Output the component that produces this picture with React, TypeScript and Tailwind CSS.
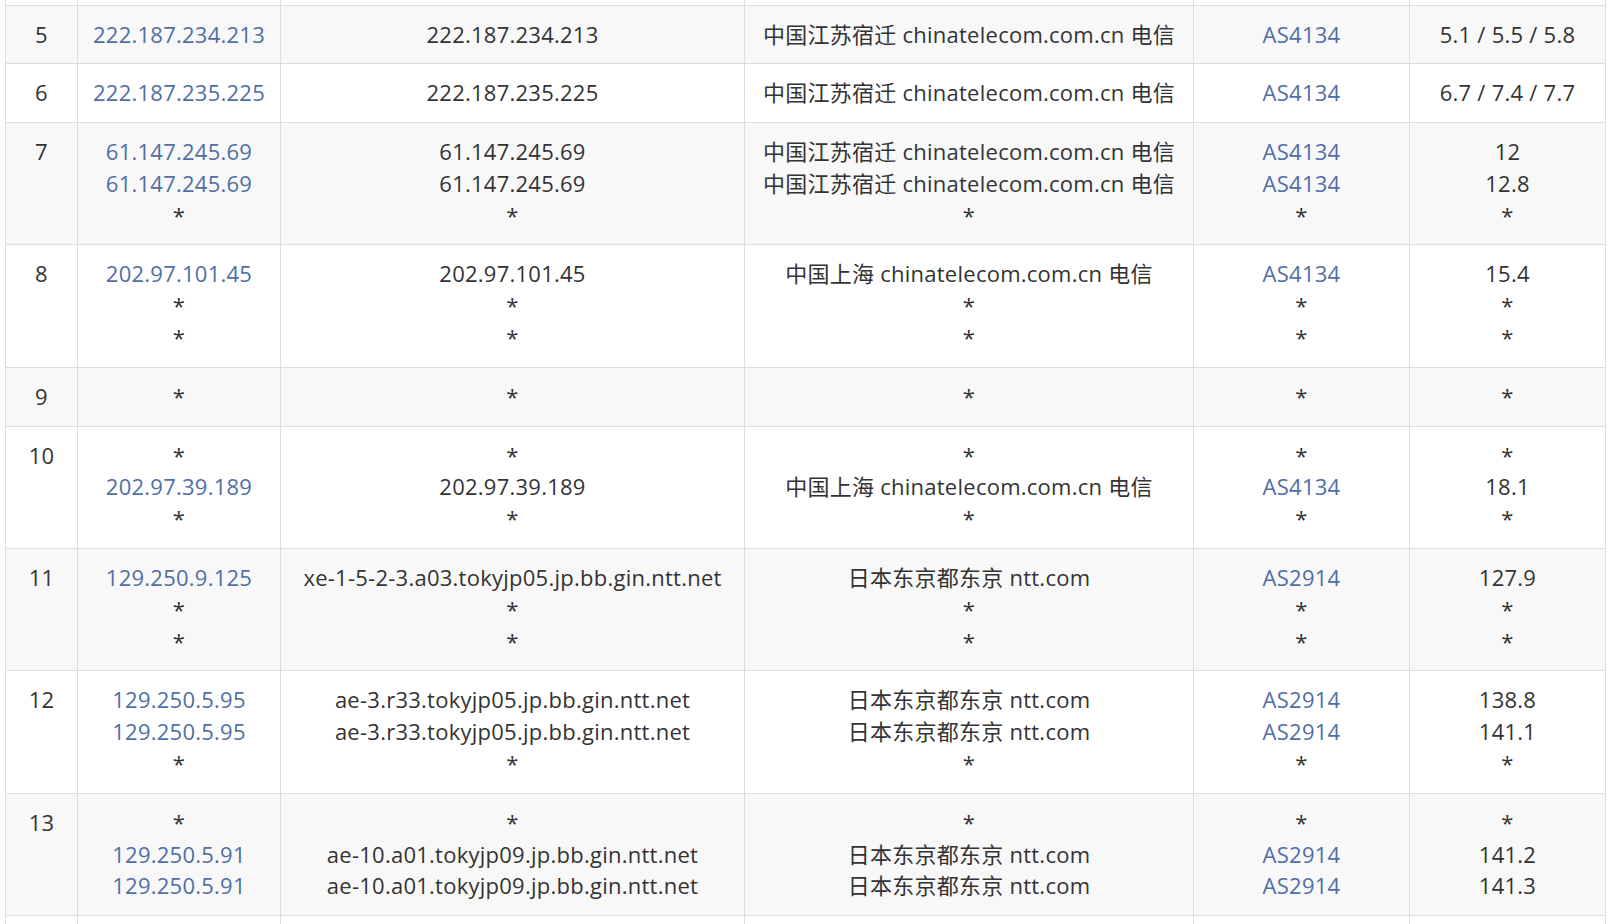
import React from "react";

type Row = {
  hop: number;
  ip: string[];
  host: string[];
  loc: string[];
  as: string[];
  rtt: string[];
};

const JS = "中国江苏宿迁 chinatelecom.com.cn 电信";
const SH = "中国上海 chinatelecom.com.cn 电信";
const TK = "日本东京都东京 ntt.com";

const rows: Row[] = [
  { hop: 5, ip: ["222.187.234.213"], host: ["222.187.234.213"], loc: [JS], as: ["AS4134"], rtt: ["5.1 / 5.5 / 5.8"] },
  { hop: 6, ip: ["222.187.235.225"], host: ["222.187.235.225"], loc: [JS], as: ["AS4134"], rtt: ["6.7 / 7.4 / 7.7"] },
  {
    hop: 7,
    ip: ["61.147.245.69", "61.147.245.69", "*"],
    host: ["61.147.245.69", "61.147.245.69", "*"],
    loc: [JS, JS, "*"],
    as: ["AS4134", "AS4134", "*"],
    rtt: ["12", "12.8", "*"],
  },
  {
    hop: 8,
    ip: ["202.97.101.45", "*", "*"],
    host: ["202.97.101.45", "*", "*"],
    loc: [SH, "*", "*"],
    as: ["AS4134", "*", "*"],
    rtt: ["15.4", "*", "*"],
  },
  { hop: 9, ip: ["*"], host: ["*"], loc: ["*"], as: ["*"], rtt: ["*"] },
  {
    hop: 10,
    ip: ["*", "202.97.39.189", "*"],
    host: ["*", "202.97.39.189", "*"],
    loc: ["*", SH, "*"],
    as: ["*", "AS4134", "*"],
    rtt: ["*", "18.1", "*"],
  },
  {
    hop: 11,
    ip: ["129.250.9.125", "*", "*"],
    host: ["xe-1-5-2-3.a03.tokyjp05.jp.bb.gin.ntt.net", "*", "*"],
    loc: [TK, "*", "*"],
    as: ["AS2914", "*", "*"],
    rtt: ["127.9", "*", "*"],
  },
  {
    hop: 12,
    ip: ["129.250.5.95", "129.250.5.95", "*"],
    host: ["ae-3.r33.tokyjp05.jp.bb.gin.ntt.net", "ae-3.r33.tokyjp05.jp.bb.gin.ntt.net", "*"],
    loc: [TK, TK, "*"],
    as: ["AS2914", "AS2914", "*"],
    rtt: ["138.8", "141.1", "*"],
  },
  {
    hop: 13,
    ip: ["*", "129.250.5.91", "129.250.5.91"],
    host: ["*", "ae-10.a01.tokyjp09.jp.bb.gin.ntt.net", "ae-10.a01.tokyjp09.jp.bb.gin.ntt.net"],
    loc: ["*", TK, TK],
    as: ["*", "AS2914", "AS2914"],
    rtt: ["*", "141.2", "141.3"],
  },
];

const cell = "border border-[#dddddd] px-2 py-[13px] text-center align-top leading-[31.8px]";
const edge = "h-[5px] border-x border-b border-[#dddddd] p-0";
const tail = "h-[40px] border-x border-t border-[#dddddd] p-0";

function Lines({ items, link }: { items: string[]; link?: boolean }) {
  return (
    <>
      {items.map((t, i) => (
        <div
          key={i}
          className={link && t !== "*" ? "text-[#4f6fa5] whitespace-nowrap" : "whitespace-nowrap"}
        >
          {t}
        </div>
      ))}
    </>
  );
}

export default function App() {
  return (
    <div className="h-[924px] overflow-hidden bg-white font-['Open_Sans','Noto_Sans_CJK_SC',sans-serif] text-[22px] tracking-[0.25px] text-[#333333]">
      <table className="ml-[5px] w-[1600px] table-fixed border-collapse">
        <colgroup>
          <col className="w-[72px]" />
          <col className="w-[203px]" />
          <col className="w-[464px]" />
          <col className="w-[449px]" />
          <col className="w-[216px]" />
          <col className="w-[196px]" />
        </colgroup>
        <tbody>
          <tr className="bg-white">
            <td className={edge} />
            <td className={edge} />
            <td className={edge} />
            <td className={edge} />
            <td className={edge} />
            <td className={edge} />
          </tr>
          {rows.map((r) => (
            <tr key={r.hop} className={r.hop % 2 === 1 ? "bg-[#f8f8f8]" : "bg-white"}>
              <td className={cell}>{r.hop}</td>
              <td className={cell}>
                <Lines items={r.ip} link />
              </td>
              <td className={cell}>
                <Lines items={r.host} />
              </td>
              <td className={cell}>
                <Lines items={r.loc} />
              </td>
              <td className={cell}>
                <Lines items={r.as} link />
              </td>
              <td className={cell}>
                <Lines items={r.rtt} />
              </td>
            </tr>
          ))}
          <tr className="bg-white">
            <td className={tail} />
            <td className={tail} />
            <td className={tail} />
            <td className={tail} />
            <td className={tail} />
            <td className={tail} />
          </tr>
        </tbody>
      </table>
    </div>
  );
}
